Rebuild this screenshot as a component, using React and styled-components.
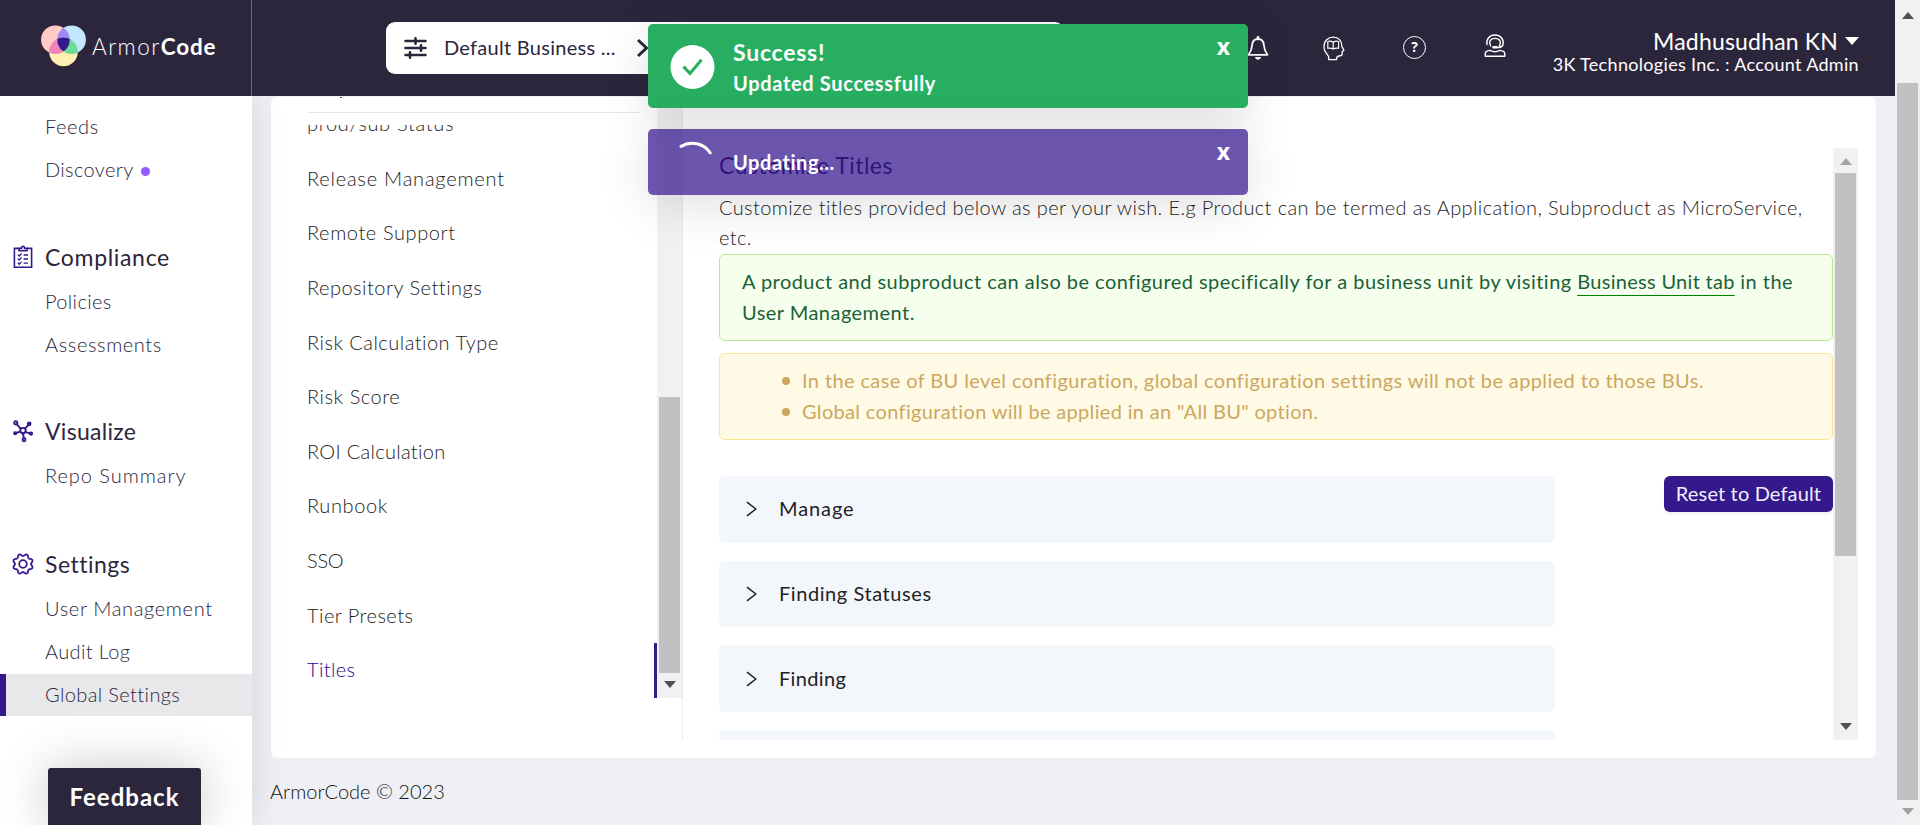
import React from 'react';
import styled, { createGlobalStyle, css } from 'styled-components';

const GlobalStyle = createGlobalStyle`
  *, *::before, *::after { box-sizing: border-box; }
  body { margin: 0; font-family: Lato, "Open Sans", sans-serif; color: #333; background: #eff0f5; }
  svg { display: block; flex: none; }
`;

const C = {
  ink: '#2c263d',
  brand: '#34188c',
  page: '#eff0f5',
  green: '#28ae61',
};

/* ---------- shell ---------- */
const Page = styled.div`
  position: relative;
  display: flex;
  width: 1920px;
  height: 825px;
  overflow: hidden;
  background: ${C.page};
`;
const Shell = styled.div`
  display: flex;
  flex-direction: column;
  width: 1895px;
`;
const Body = styled.div`
  display: flex;
  height: 729px;
`;
const Label = styled.span`
  letter-spacing: ${(p) => p.$ls || 0}px;
  white-space: nowrap;
`;

/* ---------- header ---------- */
const Header = styled.header`
  display: flex;
  align-items: center;
  height: 96px;
  background: ${C.ink};
  color: #fff;
`;
const Brand = styled.div`
  display: flex;
  align-items: center;
  width: 252px;
  height: 100%;
  padding: 0 0 4px 41px;
  border-right: 1px solid #6b6677;
`;
const BrandName = styled.div`
  margin: 1px 0 0 6px;
  font-size: 22.5px;
  font-weight: 300;
  letter-spacing: 1.5px;
  b { font-weight: 700; letter-spacing: 0.8px; }
`;
const UnitPicker = styled.div`
  display: flex;
  align-items: center;
  width: 678px;
  height: 52px;
  margin-left: 134px;
  padding-left: 18px;
  background: #fff;
  border-radius: 9px;
  color: ${C.ink};
  font-size: 20px;
`;
const UnitName = styled(Label)`
  width: 192px;
  margin-left: 17px;
  padding-bottom: 2px;
`;
const HeaderIcons = styled.div`
  display: flex;
  align-items: center;
  margin-left: 183px;
`;
const IconSlot = styled.div`
  width: ${(p) => p.$w}px;
  padding-bottom: ${(p) => p.$lift || 0}px;
`;
const Account = styled.div`
  display: flex;
  flex-direction: column;
  align-items: flex-end;
  margin: 7px 36px 0 auto;
`;
const AccountName = styled.div`
  display: flex;
  align-items: center;
  gap: 7px;
  font-size: 23px;
  line-height: 26px;
`;
const AccountRole = styled.div`
  font-size: 18px;
  line-height: 21px;
  letter-spacing: 0.32px;
`;

/* ---------- sidebar ---------- */
const Sidebar = styled.nav`
  width: 252px;
  padding-top: 10px;
  background: #fff;
  color: ${C.ink};
  box-shadow: 0 0 32px rgba(0, 0, 0, 0.12);
  clip-path: inset(0 -60px 0 0);
  z-index: 1;
`;
const Group = styled.section`
  margin-bottom: ${(p) => p.$gap}px;
`;
const GroupTitle = styled.div`
  display: flex;
  align-items: center;
  height: 45px;
  padding: 0 0 3px 10.5px;
  gap: 10.5px;
  font-size: 23px;
`;
const NavItem = styled.div`
  display: flex;
  align-items: center;
  height: 43px;
  padding: 0 0 3px 45px;
  font-size: 20px;
  font-weight: 300;
  ${(p) => p.$active && css`
    height: 42px;
    padding: 0 0 2px 39px;
    border-left: 6px solid ${C.brand};
    background: #e8e8ea;
  `}
`;
const Dot = styled.i`
  width: 9px;
  height: 9px;
  margin: 5px 0 0 7px;
  border-radius: 50%;
  background: #8f5cff;
`;
const Feedback = styled.div`
  position: absolute;
  left: 48px;
  bottom: 0;
  z-index: 2;
  width: 153px;
  height: 57px;
  border-radius: 3px 3px 0 0;
  background: ${C.ink};
  color: #fff;
  box-shadow: 0 0 50px rgba(0, 0, 0, 0.22);
  font-size: 24px;
  font-weight: 700;
  line-height: 58px;
  text-align: center;
  letter-spacing: 1px;
`;

/* ---------- content ---------- */
const Content = styled.main`
  display: flex;
  flex-direction: column;
  flex: 1;
  padding: 1px 19px 0 19px;
`;
const Card = styled.div`
  display: flex;
  height: 661px;
  background: #fff;
  border-radius: 6px;
`;
const Footer = styled.footer`
  margin-left: -1px;
  padding-top: 20px;
  font-size: 20px;
  font-weight: 300;
  line-height: 26px;
  letter-spacing: 0.02px;
  color: #111;
`;
const TabColumn = styled.div`
  display: flex;
  width: 412px;
  height: 643px;
  padding-left: 36px;
  border-right: 1px solid #ececec;
`;
const TabList = styled.div`
  flex: 1;
`;
const TabHeader = styled.div`
  height: 16px;
  margin-right: 17px;
  padding-left: 33px;
  border-bottom: 1px solid #e6e6e6;
  &::before { content: ''; display: block; width: 2px; height: 1px; background: #555; }
`;
const TabViewport = styled.div`
  height: 573px;
  margin-top: 12px;
  overflow: hidden;
`;
const TabItems = styled.div`
  margin-top: -27.5px;
`;
const TabItem = styled.div`
  display: flex;
  align-items: center;
  height: 54.6px;
  padding-bottom: 3px;
  font-size: 20px;
  font-weight: 300;
  color: ${(p) => (p.$active ? '#25048c' : '#222')};
  border-right: 3px solid ${(p) => (p.$active ? C.brand : 'transparent')};
`;
const Panel = styled.div`
  display: flex;
  height: 592px;
  margin-top: 51px;
  padding-left: 36px;
`;
const PanelBody = styled.div`
  width: 1114px;
  overflow: hidden;
`;
const Title = styled.h1`
  margin: 0 0 10px;
  font-size: 23px;
  font-weight: 400;
  line-height: 34px;
  letter-spacing: 0.5px;
  color: #1f1048;
`;
const Description = styled.p`
  margin: 0 0 2px;
  font-size: 20px;
  font-weight: 300;
  line-height: 30px;
  letter-spacing: 0.38px;
  color: #222;
  white-space: nowrap;
`;
const Alert = styled.div`
  height: 87px;
  margin-bottom: 12px;
  padding: 11px 22px;
  border: 1px solid ${(p) => (p.$warn ? '#ffe58f' : '#b7eb8f')};
  border-radius: 6px;
  background: ${(p) => (p.$warn ? '#fffae6' : '#f6ffed')};
  color: ${(p) => (p.$warn ? '#cda75e' : '#1a6138')};
  font-size: 20px;
  line-height: 31px;
  letter-spacing: 0.46px;
`;
const Link = styled.a`
  letter-spacing: 0.3px;
  text-decoration: underline 1px green;
  text-underline-offset: 6px;
  text-decoration-skip-ink: none;
`;
const Bullets = styled.ul`
  margin: 0;
  padding-left: 36px;
  list-style: none;
`;
const Bullet = styled.li`
  display: flex;
  align-items: center;
  gap: 12px;
  padding-left: 4px;
  &::before {
    content: '';
    width: 8px;
    height: 8px;
    border-radius: 50%;
    background: currentColor;
  }
`;
const Sections = styled.div`
  display: flex;
  align-items: flex-start;
  justify-content: space-between;
  margin-top: 36px;
`;
const Accordion = styled.div`
  display: flex;
  flex-direction: column;
  gap: 18px;
  width: 836px;
`;
const AccordionRow = styled.div`
  display: flex;
  align-items: center;
  gap: 22px;
  height: 66.7px;
  padding-left: 27px;
  border-radius: 6px;
  background: #f3f7fc;
  color: #222;
  font-size: 20px;
  span { padding-bottom: 2px; }
`;
const ResetButton = styled.button`
  width: 169px;
  height: 36px;
  padding: 0 0 2px;
  border: 0;
  border-radius: 6px;
  background: ${C.brand};
  box-shadow: 0 3px 3px rgba(0, 0, 0, 0.05);
  color: #f0eef8;
  font: 400 20px Lato, sans-serif;
  letter-spacing: 0.15px;
`;

/* ---------- scrollbar ---------- */
const Track = styled.div`
  display: flex;
  flex-direction: column;
  align-items: center;
  flex: none;
  width: 25px;
  height: ${(p) => p.$h}px;
  padding-top: ${(p) => p.$start}px;
  background: #f1f1f1;
`;
const Thumb = styled.div`
  width: 21px;
  height: ${(p) => p.$h}px;
  margin-top: ${(p) => p.$gap || 0}px;
  background: #c1c1c1;
`;
const Arrow = styled.i`
  width: 0;
  height: 0;
  border: solid transparent;
  border-width: 0 6px;
  ${(p) => p.$up
    ? css`border-bottom: 7px solid ${p.$color};`
    : css`border-top: 7px solid ${p.$color}; margin: auto 0 10px;`}
`;

/* ---------- toasts ---------- */
const Toasts = styled.div`
  position: absolute;
  left: 648px;
  top: 24px;
  z-index: 5;
  display: flex;
  flex-direction: column;
  gap: 21px;
  width: 600px;
`;
const Toast = styled.div`
  display: flex;
  align-items: center;
  height: ${(p) => p.$h}px;
  padding-left: 22px;
  border-radius: 5px;
  background: ${(p) => p.$bg};
  box-shadow: 0 10px 50px rgba(0, 0, 0, 0.13);
  color: #fff;
  font-weight: 700;
`;
const ToastText = styled.div`
  display: flex;
  flex-direction: column;
  flex: 1;
  margin-left: 18px;
  padding-top: ${(p) => p.$drop || 0}px;
  font-size: 20px;
  line-height: 31px;
`;
const ToastTitle = styled(Label)`
  font-size: 23px;
`;
const Close = styled.div`
  align-self: flex-start;
  margin: 10px 18px 0 0;
  font: 700 23px/24px "Open Sans", sans-serif;
`;

/* ---------- drawings ---------- */
const Logo = () => (
  <svg width="45" height="42" viewBox="41 25.5 45 42">
    <defs>
      <clipPath id="pk"><circle cx="55.4" cy="40.2" r="14.3" /></clipPath>
      <clipPath id="bl"><circle cx="71.6" cy="40.2" r="14.3" /></clipPath>
    </defs>
    <circle cx="63.5" cy="52.4" r="14.3" fill="#ffefb0" />
    <circle cx="55.4" cy="40.2" r="14.3" fill="#ffcbc5" />
    <circle cx="71.6" cy="40.2" r="14.3" fill="#c2e7ff" />
    <g clipPath="url(#pk)"><circle cx="71.6" cy="40.2" r="14.3" fill="#a386f8" /></g>
    <g clipPath="url(#pk)"><circle cx="63.5" cy="52.4" r="14.3" fill="#f083b7" /></g>
    <g clipPath="url(#bl)"><circle cx="63.5" cy="52.4" r="14.3" fill="#6ddc94" /></g>
    <g clipPath="url(#pk)"><g clipPath="url(#bl)"><circle cx="63.5" cy="52.4" r="14.3" fill="#34188c" /></g></g>
  </svg>
);
const Sliders = () => (
  <svg width="23" height="22" viewBox="0 0 23 22" fill="none" stroke={C.ink} strokeWidth="2.6" strokeLinecap="round">
    <path d="M1.5 4H21.5M1.5 11H21.5M1.5 18H21.5M11.5 1.3V6.7M17 8.3V13.7M6 15.3V20.7" />
  </svg>
);
const Bell = () => (
  <svg width="22" height="25" viewBox="0 0 22 25" fill="none" stroke="#fff" strokeWidth="1.8" strokeLinejoin="round">
    <path d="M11 3C7.6 3 5.4 5.4 5.1 9C4.9 13 4.3 15 1.6 18.8H20.4C17.7 15 17.1 13 16.9 9C16.6 5.4 14.4 3 11 3Z" />
    <path d="M11 1.2V3" strokeWidth="2.6" strokeLinecap="round" />
    <path d="M8 21H14C13.4 24.6 8.6 24.6 8 21Z" fill="#fff" stroke="none" />
  </svg>
);
const Head = () => (
  <svg width="22" height="25" viewBox="0 0 22 25" fill="none" stroke="#fff" strokeWidth="1.3" strokeLinejoin="round">
    <path d="M5.6 23.7C6 21.4 5.8 20 4.4 18.4C2.2 16.4 1 13.8 1 10.6C1 4.8 5 1.2 10.4 1.2C15.6 1.2 18.8 4.8 18.8 9.8C18.8 11.4 20.8 13.4 20.8 14.2C20.8 15 19.2 14.8 19.2 15.8V18C19.2 19.8 17.8 20 15.6 20C14.2 20.2 13.6 21.4 13.4 23.7Z" />
    <path d="M10.2 6.2C8.4 5 6.4 5 4.8 5.5V12.3C6.6 11.9 8.4 12 10.2 13C12 12 13.8 11.9 15.6 12.3V5.5C14 5 12 5 10.2 6.2ZM10.2 6.2V13" strokeWidth="1.15" />
  </svg>
);
const QuestionRing = styled.div`
  width: 23px;
  height: 23px;
  border: 1.5px solid #fff;
  border-radius: 50%;
  font: 700 14px/20px "Open Sans", sans-serif;
  text-align: center;
`;
const Agent = () => (
  <svg width="22" height="24" viewBox="0 0 22 24" fill="none" stroke="#fff" strokeWidth="1.4" strokeLinecap="round" strokeLinejoin="round">
    <path d="M3 10.5C2 5 5.5 1 11 1C16.5 1 20 5 19 10.5C18.7 12.3 17 13.5 13 13.6" />
    <path d="M6.6 12C4.4 8 6 4.4 11 4.4C16 4.4 17.6 8 15.4 12" />
    <path d="M9.6 13.3H12.4" strokeWidth="2.6" />
    <path d="M1.2 22.2V20C1.2 17.4 3.4 16.6 6 16.4C9 18 13 18 16 16.4C18.6 16.6 20.8 17.4 20.8 20V22.2Z" />
  </svg>
);
const Caret = () => (
  <svg width="14" height="8" viewBox="0 0 14 8"><path d="M0 0H14L7 8Z" fill="#fff" /></svg>
);
const Clipboard = () => (
  <svg width="24" height="24" viewBox="0 0 24 24" fill="none" stroke={C.brand} strokeWidth="1.6">
    <path d="M8 3.4H3.4V22.2H20.6V3.4H16" />
    <path d="M8 5.6V3.2H10.4C10.4 .8 13.6 .8 13.6 3.2H16V5.6Z" />
    <path d="M12.6 10H17M12.6 14H17M12.6 18.2H17M6.8 9.6L8.2 11L10.6 8.4M6.8 13.6L8.2 15L10.6 12.4M6.8 17.8L8.2 19.2L10.6 16.6" strokeWidth="1.3" />
  </svg>
);
const Nodes = () => (
  <svg width="24" height="24" viewBox="0 0 24 24" fill="none" stroke={C.brand} strokeWidth="1.9">
    <path d="M5.5 4.8L9.8 9.8M14 9.6L17.6 5.6M9.2 12.6L5 14M14.4 12.8L19.4 14.6M12 14.5L13 20" />
    <circle cx="12" cy="11.6" r="2.7" />
    <circle cx="4.8" cy="3.8" r="1.6" />
    <circle cx="18.2" cy="4.8" r="1.4" fill={C.brand} />
    <circle cx="4.2" cy="14.2" r="1.1" fill={C.brand} />
    <circle cx="20" cy="14.6" r="1.2" fill={C.brand} />
    <circle cx="13" cy="20.8" r="1.5" />
  </svg>
);
/* eight rounded lobes, traced as a polar curve */
const gearOutline = Array.from({ length: 96 }, (_, i) => {
  const a = (i / 96) * Math.PI * 2;
  const r = 9.1 + 1.1 * Math.cos(8 * (a + Math.PI / 8));
  return `${i ? 'L' : 'M'}${(12 + r * Math.cos(a)).toFixed(2)} ${(12 + r * Math.sin(a)).toFixed(2)}`;
}).join('') + 'Z';
const Gear = () => (
  <svg width="24" height="24" viewBox="0 0 24 24" fill="none" stroke={C.brand} strokeWidth="1.8" strokeLinejoin="round">
    <path d={gearOutline} />
    <circle cx="12" cy="12" r="3.8" />
  </svg>
);
const Chevron = () => (
  <svg width="11" height="16" viewBox="0 0 11 16" fill="none" stroke="#222" strokeWidth="1.5"><path d="M1 1.2L9.8 8L1 14.8" /></svg>
);
const PickerChevron = () => (
  <svg width="13" height="20" viewBox="0 0 13 20" fill="none" stroke={C.ink} strokeWidth="3"><path d="M2 2L10.5 10L2 18" /></svg>
);
const CheckBadge = () => (
  <svg width="45" height="45" viewBox="0 0 45 45">
    <circle cx="22.5" cy="23" r="22" fill="#fff" />
    <path d="M13.5 22.6L20 29.4L31.5 15.8" fill="none" stroke={C.green} strokeWidth="3" />
  </svg>
);
const Spinner = () => (
  <svg width="45" height="45" viewBox="0 0 45 45">
    <path d="M11 6.4A21.5 21.5 0 0 1 40.2 12.8" fill="none" stroke="#fff" strokeWidth="3" strokeLinecap="round" />
  </svg>
);

/* ---------- data ---------- */
const nav = [
  { gap: 44, items: [['Feeds', 0.6], ['Discovery', 0.35, 'dot']] },
  { title: 'Compliance', ls: 0.68, icon: Clipboard, gap: 43, items: [['Policies', 0.35], ['Assessments', 0.6]] },
  { title: 'Visualize', ls: 0.3, icon: Nodes, gap: 45, items: [['Repo Summary', 0.95]] },
  { title: 'Settings', ls: 0.5, icon: Gear, gap: 0, items: [['User Management', 0.65], ['Audit Log', 0.35], ['Global Settings', 0.38, 'active']] },
];
const tabs = [
  ['prod/sub Status', 0.7], ['Release Management', 0.78], ['Remote Support', 0.6], ['Repository Settings', 0.49],
  ['Risk Calculation Type', 0.48], ['Risk Score', 0.55], ['ROI Calculation', 0.3], ['Runbook', 0.6],
  ['SSO', -0.3], ['Tier Presets', 0.45], ['Titles', 0.35],
];
const sections = [['Manage', 0.9], ['Finding Statuses', 0.57], ['Finding', 0.35], ['', 0]];

export default function App() {
  return (
    <Page>
      <GlobalStyle />
      <Shell>
        <Header>
          <Brand>
            <Logo />
            <BrandName>Armor<b>Code</b></BrandName>
          </Brand>
          <UnitPicker>
            <Sliders />
            <UnitName $ls={0.28}>Default Business ...</UnitName>
            <PickerChevron />
          </UnitPicker>
          <HeaderIcons>
            <IconSlot $w={76}><Bell /></IconSlot>
            <IconSlot $w={80}><Head /></IconSlot>
            <IconSlot $w={81} $lift={1}><QuestionRing>?</QuestionRing></IconSlot>
            <IconSlot $w={22} $lift={5}><Agent /></IconSlot>
          </HeaderIcons>
          <Account>
            <AccountName><Label $ls={0.18}>Madhusudhan KN</Label><Caret /></AccountName>
            <AccountRole>3K Technologies Inc. : Account Admin</AccountRole>
          </Account>
        </Header>
        <Body>
          <Sidebar>
            {nav.map(({ title, ls, icon: Icon, gap, items }, i) => (
              <Group key={i} $gap={gap}>
                {title && <GroupTitle><Icon /><Label $ls={ls}>{title}</Label></GroupTitle>}
                {items.map(([text, track, flag]) => (
                  <NavItem key={text} $active={flag === 'active'}>
                    <Label $ls={track}>{text}</Label>
                    {flag === 'dot' && <Dot />}
                  </NavItem>
                ))}
              </Group>
            ))}
          </Sidebar>
          <Content>
            <Card>
              <TabColumn>
                <TabList>
                  <TabHeader />
                  <TabViewport>
                    <TabItems>
                      {tabs.map(([text, track]) => (
                        <TabItem key={text} $active={text === 'Titles'}>
                          <Label $ls={track}>{text}</Label>
                        </TabItem>
                      ))}
                    </TabItems>
                  </TabViewport>
                </TabList>
                <Track $h={601} $start={300}>
                  <Thumb $h={276} />
                  <Arrow $color="#505050" />
                </Track>
              </TabColumn>
              <Panel>
                <PanelBody>
                  <Title>Customize Titles</Title>
                  <Description>
                    Customize titles provided below as per your wish. E.g Product can be termed as Application, Subproduct as MicroService,<br />etc.
                  </Description>
                  <Alert>
                    A product and subproduct can also be configured specifically for a business unit by visiting <Link>Business Unit tab</Link> in the<br />
                    User Management.
                  </Alert>
                  <Alert $warn>
                    <Bullets>
                      <Bullet><Label $ls={0.385}>In the case of BU level configuration, global configuration settings will not be applied to those BUs.</Label></Bullet>
                      <Bullet><Label $ls={0.33}>Global configuration will be applied in an "All BU" option.</Label></Bullet>
                    </Bullets>
                  </Alert>
                  <Sections>
                    <Accordion>
                      {sections.map(([text, track], i) => (
                        <AccordionRow key={i}><Chevron /><Label $ls={track}>{text}</Label></AccordionRow>
                      ))}
                    </Accordion>
                    <ResetButton>Reset to Default</ResetButton>
                  </Sections>
                </PanelBody>
                <Track $h={592} $start={10}>
                  <Arrow $up $color="#a3a3a3" />
                  <Thumb $h={383} $gap={8} />
                  <Arrow $color="#505050" />
                </Track>
              </Panel>
            </Card>
            <Footer>ArmorCode © 2023</Footer>
          </Content>
        </Body>
      </Shell>
      <Track $h={825} $start={12}>
        <Arrow $up $color="#505050" />
        <Thumb $h={717} $gap={64} />
        <Arrow $color="#a3a3a3" />
      </Track>
      <Feedback>Feedback</Feedback>
      <Toasts>
        <Toast $h={84} $bg={C.green}>
          <CheckBadge />
          <ToastText $drop={3}>
            <ToastTitle $ls={0.75}>Success!</ToastTitle>
            <Label $ls={0.67}>Updated Successfully</Label>
          </ToastText>
          <Close>x</Close>
        </Toast>
        <Toast $h={66} $bg="rgba(53, 22, 142, 0.73)">
          <Spinner />
          <ToastText><Label $ls={0.55}>Updating...</Label></ToastText>
          <Close>x</Close>
        </Toast>
      </Toasts>
    </Page>
  );
}
